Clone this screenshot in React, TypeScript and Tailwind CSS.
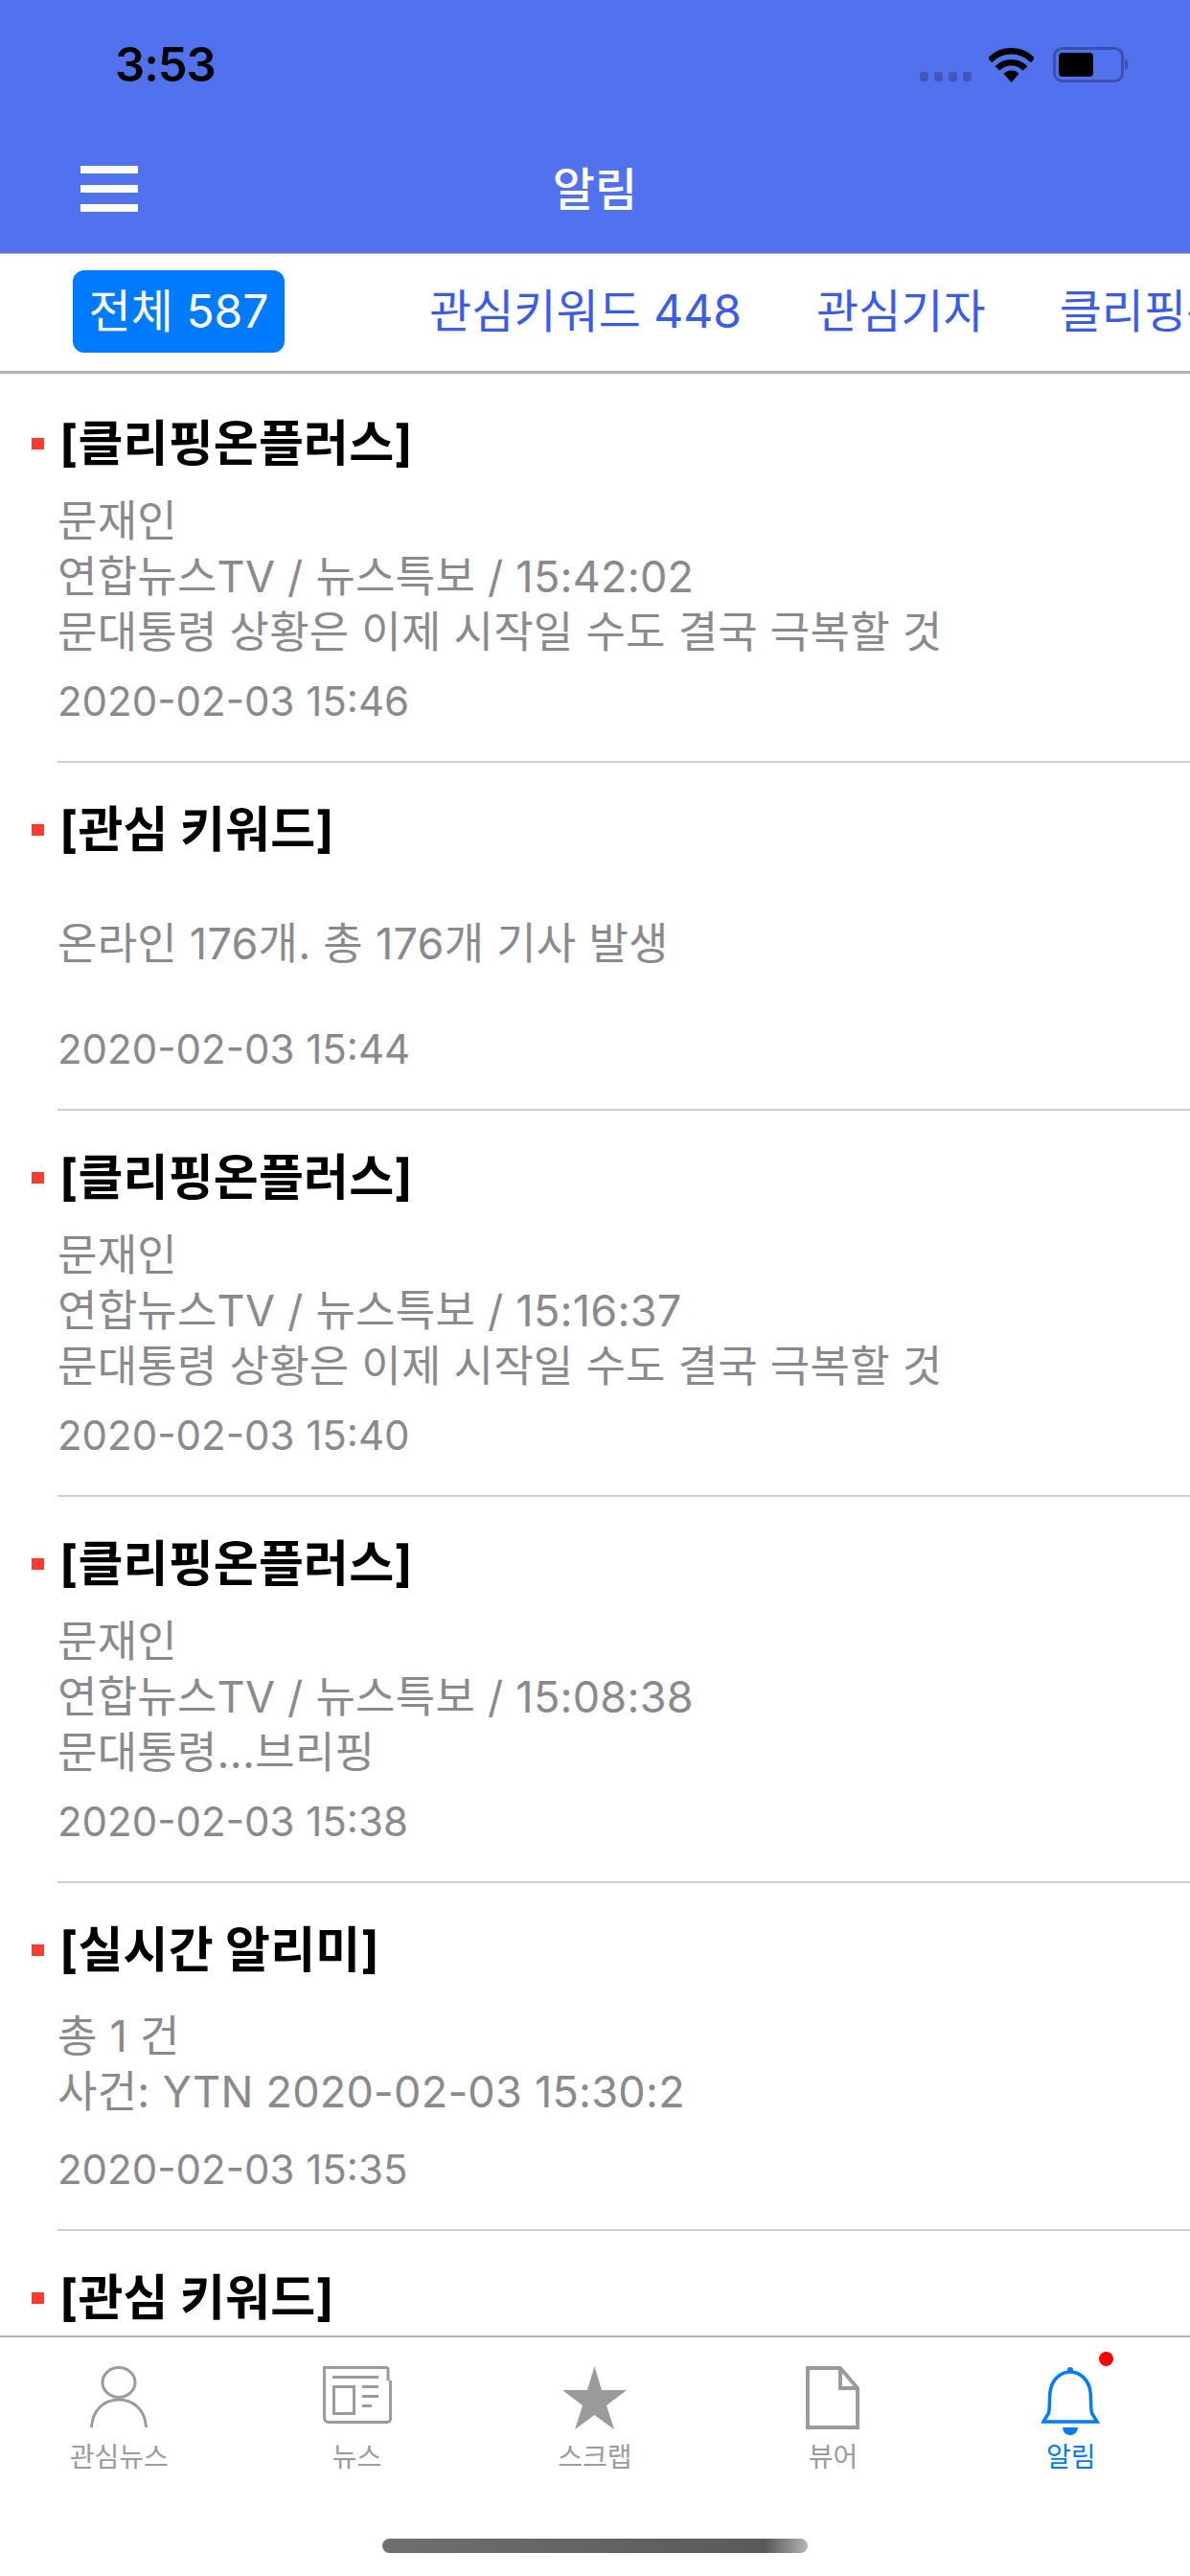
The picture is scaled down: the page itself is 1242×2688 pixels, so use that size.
import React from "react";

type Notice = {
  title: string;
  lines: string[];
  date: string;
};

const notices: Notice[] = [
  {
    title: "[클리핑온플러스]",
    lines: ["문재인", "연합뉴스TV / 뉴스특보 / 15:42:02", "문대통령 상황은 이제 시작일 수도 결국 극복할 것"],
    date: "2020-02-03 15:46",
  },
  {
    title: "[관심 키워드]",
    lines: ["온라인 176개. 총 176개 기사 발생"],
    date: "2020-02-03 15:44",
  },
  {
    title: "[클리핑온플러스]",
    lines: ["문재인", "연합뉴스TV / 뉴스특보 / 15:16:37", "문대통령 상황은 이제 시작일 수도 결국 극복할 것"],
    date: "2020-02-03 15:40",
  },
  {
    title: "[클리핑온플러스]",
    lines: ["문재인", "연합뉴스TV / 뉴스특보 / 15:08:38", "문대통령...브리핑"],
    date: "2020-02-03 15:38",
  },
  {
    title: "[실시간 알리미]",
    lines: ["총 1 건", "사건: YTN 2020-02-03 15:30:2"],
    date: "2020-02-03 15:35",
  },
  {
    title: "[관심 키워드]",
    lines: ["온라인 176개. 총 176개 기사 발생"],
    date: "2020-02-03 15:30",
  },
];

const PersonIcon = () => (
  <svg width="60" height="64" viewBox="0 0 60 64" fill="none" stroke="#9b9b9b" strokeWidth="3">
    <ellipse cx="30" cy="17" rx="17" ry="15.5" />
    <path d="M1.5 63C3 45 15 35 30 35s27 10 28.5 28" strokeLinecap="round" />
  </svg>
);

const NewsIcon = () => (
  <svg width="72" height="60" viewBox="0 0 72 60" fill="none" stroke="#9b9b9b" strokeWidth="3">
    <path d="M68 1.5H1.5V54a4.5 4.5 0 0 0 4.5 4.5h61a3.5 3.5 0 0 0 3.5-3.5V15" />
    <path d="M68 1.5V15" />
    <path d="M10 11.5H58M41 21.5H58M41 31.5H58M41 41.5H51" />
    <rect x="11.5" y="21.5" width="21" height="28" />
  </svg>
);

const StarIcon = () => (
  <svg width="67" height="66" viewBox="0 0 67 66" fill="#9b9b9b">
    <polygon points="33.5,0 41,25 67,25 46,41 54,66 33.5,51 13,66 21,41 0,25 26,25" />
  </svg>
);

const DocIcon = () => (
  <svg width="56" height="66" viewBox="0 0 56 66" fill="none" stroke="#9b9b9b" strokeWidth="4">
    <path d="M2 2H36L54 23V64H2Z" />
    <path d="M36 2V23H54" />
  </svg>
);

const BellIcon = () => (
  <svg width="61" height="72" viewBox="0 0 61 72" fill="none" stroke="#007aff" strokeWidth="3.5">
    <circle cx="30" cy="4" r="3" fill="#007aff" stroke="none" />
    <path d="M2 58L7.5 49C9 42 8 34 9 27C10.500 14 20 6 30 6S49.500 14 51 27C52 34 51 42 52.500 49L58 58Z" />
    <path d="M22 64H38A8 8 0 0 1 22 64Z" fill="#007aff" stroke="none" />
  </svg>
);

const WifiIcon = () => (
  <svg width="47" height="36" viewBox="0 0 47 36" fill="none" stroke="#000">
    <path d="M1 13A31 31 0 0 1 46 13" strokeWidth="6.500" />
    <path d="M9 21.500A20 20 0 0 1 38 21.500" strokeWidth="6.500" />
    <path d="M23.500 36L15.500 27A11 11 0 0 1 31.500 27Z" fill="#000" stroke="none" />
  </svg>
);

const BatteryIcon = () => (
  <svg width="78" height="37" viewBox="0 0 78 37" fill="none">
    <rect x="1.500" y="1.500" width="71" height="34" rx="8" stroke="#3a50b0" strokeWidth="3" />
    <rect x="6" y="6" width="36" height="25" rx="4" fill="#000" />
    <path d="M75 13a7 6 0 0 1 0 11Z" fill="#3a50b0" />
  </svg>
);

const tabs = [
  { label: "관심뉴스", icon: <PersonIcon /> },
  { label: "뉴스", icon: <NewsIcon /> },
  { label: "스크랩", icon: <StarIcon /> },
  { label: "뷰어", icon: <DocIcon /> },
  { label: "알림", icon: <BellIcon />, active: true },
];

export default function App() {
  return (
    <div className="w-[1242px] h-[2688px] flex flex-col overflow-hidden bg-white font-['Inter','Noto_Sans_CJK_KR',sans-serif]">
      {/* status bar + nav */}
      <header className="h-[265px] shrink-0 bg-[#5271ed] border-b border-[#b2b2b2]">
        <div className="h-[132px] flex items-start pt-[41px] pl-[120px] pr-[65px]">
          <span className="text-[49px] leading-[54px] font-semibold text-black tracking-[-1px]">3:53</span>
          <div className="ml-auto flex items-end h-[37px] mt-[8px]">
            <div className="flex gap-[6px] mb-[1px] mr-[18px]">
              <span className="w-[9px] h-[10px] rounded-[3px] bg-[#3f57bf]" />
              <span className="w-[9px] h-[10px] rounded-[3px] bg-[#3f57bf]" />
              <span className="w-[9px] h-[10px] rounded-[3px] bg-[#3f57bf]" />
              <span className="w-[9px] h-[10px] rounded-[3px] bg-[#3f57bf]" />
            </div>
            <WifiIcon />
            <div className="ml-[20px]">
              <BatteryIcon />
            </div>
          </div>
        </div>
        <div className="relative flex items-center justify-center h-[132px]">
          <div className="absolute left-[84px] top-[41px] w-[60px] flex flex-col gap-[12px]">
            <span className="h-[8px] bg-white" />
            <span className="h-[8px] bg-white" />
            <span className="h-[8px] bg-white" />
          </div>
          <span className="text-[48px] leading-[60px] text-white font-medium">알림</span>
        </div>
      </header>

      {/* category tabs */}
      <nav className="h-[125px] shrink-0 flex items-center whitespace-nowrap overflow-hidden border-b-[3px] border-[#b2b2b2] text-[48px] text-[#3d5ce6] pb-[3px]">
        <span className="shrink-0 ml-[76px] w-[221px] h-[86px] flex items-center justify-center rounded-[12px] bg-[#007aff] text-white">전체 587</span>
        <span className="shrink-0 ml-[151px]">관심키워드 448</span>
        <span className="shrink-0 ml-[78px]">관심기자</span>
        <span className="shrink-0 ml-[77px]">클리핑온플러스</span>
      </nav>

      {/* notice list */}
      <main className="flex-1 min-h-0 overflow-hidden pt-[3px]">
        {notices.map((item, i) => (
          <article key={i}>
            <div className="flex items-center pl-[33px] pt-[40px] h-[100px]">
              <span className="w-[13px] h-[12px] bg-[#ff3b30]" />
              <h2 className="ml-[16px] text-[51px] leading-[60px] font-bold text-black tracking-[0.2px]">{item.title}</h2>
            </div>
            <div className="mt-[22px] pl-[60px] min-h-[134px] flex flex-col justify-center text-[45px] leading-[58px] tracking-[0.25px] text-[#8a8a8e]">
              {item.lines.map((line) => (
                <p key={line}>{line}</p>
              ))}
            </div>
            <p className="mt-[13px] pl-[60px] text-[42px] leading-[60px] text-[#8a8a8e]">{item.date}</p>
            <div className="mt-[32px] ml-[60px] h-[2px] bg-[#cfcfcf]" />
          </article>
        ))}
      </main>

      {/* bottom tab bar */}
      <footer className="h-[251px] shrink-0 flex flex-col bg-white border-t-2 border-[#b2b2b2]">
        <div className="grid grid-cols-5 pt-[30px]">
          {tabs.map((tab) => (
            <div key={tab.label} className="flex flex-col items-center">
              <div className="relative h-[72px] flex items-start justify-center">
                {tab.icon}
                {tab.active && <span className="absolute left-[60px] top-[-15px] w-[15px] h-[15px] rounded-full bg-[#ff0000]" />}
              </div>
              <span className={`mt-[7px] text-[28px] leading-[32px] ${tab.active ? "text-[#007aff]" : "text-[#9b9b9b]"}`}>{tab.label}</span>
            </div>
          ))}
        </div>
        <div className="mt-auto mb-[24px] self-center w-[444px] h-[15px] rounded-full bg-linear-to-r from-[#6f6f6f] via-[#5a5a5a] via-90% to-[#b5b5b5]" />
      </footer>
    </div>
  );
}
